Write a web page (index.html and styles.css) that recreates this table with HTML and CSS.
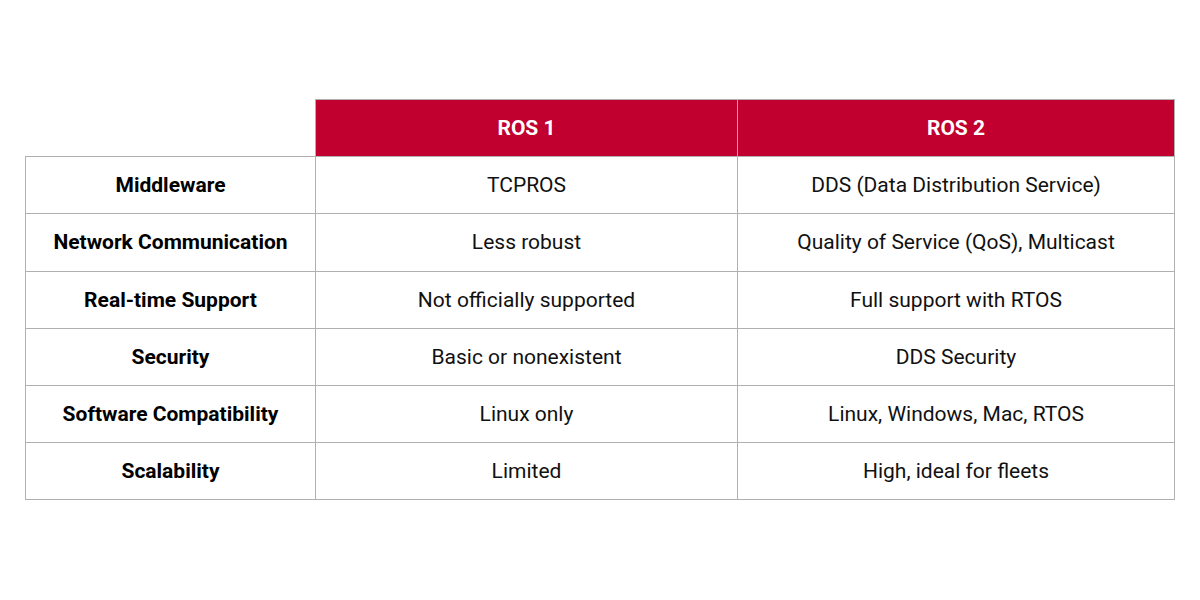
FILE: index.html
```html
<!DOCTYPE html>
<html>
<head>
<meta charset="utf-8">
<link rel="stylesheet" href="styles.css">
</head>
<body>
<table class="cmp">
  <colgroup>
    <col class="c-label">
    <col class="c-ros1">
    <col class="c-ros2">
  </colgroup>
  <thead>
    <tr>
      <th class="blank"></th>
      <th class="head">ROS 1</th>
      <th class="head">ROS 2</th>
    </tr>
  </thead>
  <tbody>
    <tr><th class="label">Middleware</th><td>TCPROS</td><td>DDS (Data Distribution Service)</td></tr>
    <tr><th class="label">Network Communication</th><td>Less robust</td><td>Quality of Service (QoS), Multicast</td></tr>
    <tr><th class="label">Real-time Support</th><td>Not officially supported</td><td>Full support with RTOS</td></tr>
    <tr><th class="label">Security</th><td>Basic or nonexistent</td><td>DDS Security</td></tr>
    <tr><th class="label">Software Compatibility</th><td>Linux only</td><td>Linux, Windows, Mac, RTOS</td></tr>
    <tr><th class="label">Scalability</th><td>Limited</td><td>High, ideal for fleets</td></tr>
  </tbody>
</table>
</body>
</html>
```
FILE: styles.css
```css
html, body {
  margin: 0;
  padding: 0;
  background: #ffffff;
}
body {
  font-family: Roboto, "Liberation Sans", sans-serif;
  color: #000;
}
.cmp {
  border-collapse: collapse;
  table-layout: fixed;
  width: 1149px;
  margin: 99px 0 0 25px;
}
.c-label { width: 290px; }
.c-ros1 { width: 422px; }
.c-ros2 { width: 437px; }
.cmp th, .cmp td {
  border: 1px solid #b0b0b0;
  height: 56.2px;
  padding: 0;
  text-align: center;
  vertical-align: middle;
  font-size: 21px;
  line-height: 24px;
}
.cmp td {
  font-weight: 400;
  color: #111;
}
.cmp .label {
  font-weight: 700;
  color: #000;
}
.cmp .blank {
  border-top: none;
  border-left: none;
  background: #fff;
}
.cmp .head {
  background: #c1002f;
  color: #fff;
  font-weight: 700;
}
```
